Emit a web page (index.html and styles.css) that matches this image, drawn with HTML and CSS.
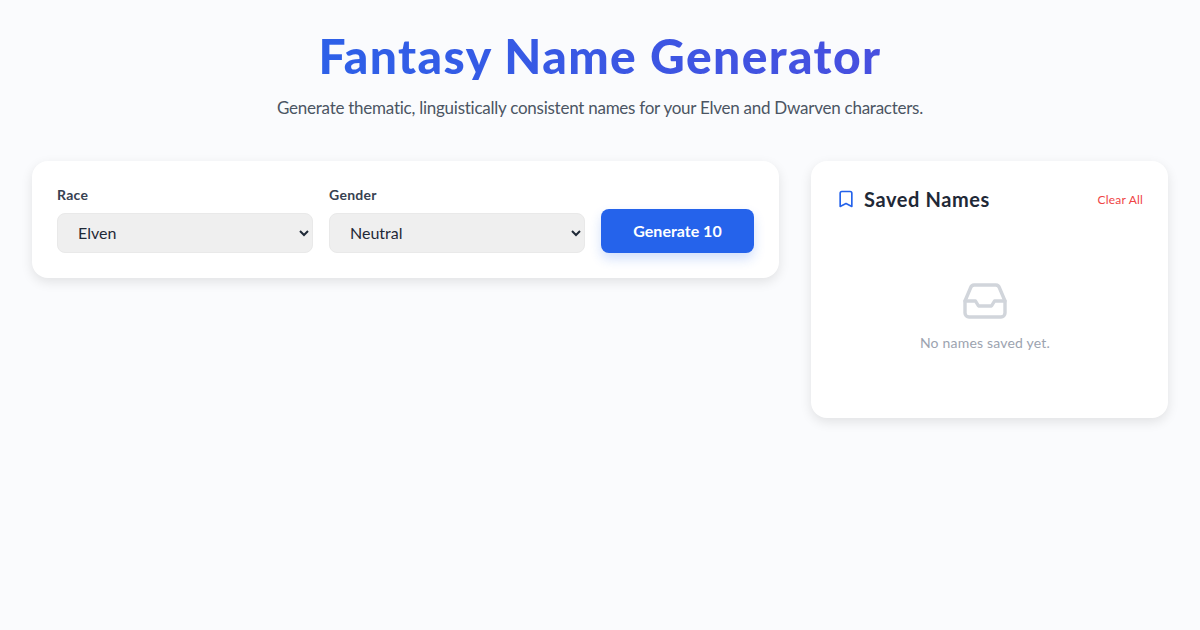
FILE: index.html
```html
<!DOCTYPE html>
<html lang="en">
<head>
    <meta charset="UTF-8">
    <meta name="viewport" content="width=device-width, initial-scale=1.0">
    <title>Fantasy Name Generator</title>
    <link rel="stylesheet" href="styles.css">
</head>

<body>

<header class="page-header">
    <h1>Fantasy Name Generator</h1>
    <p>Generate thematic, linguistically consistent names for your Elven and Dwarven characters.</p>
</header>

<main class="layout">
    <!-- Section: Generator form -->
    <section class="card generator">
        <div class="field">
            <label for="race">Race</label>
            <select id="race">
                <option>Elven</option>
                <option>Dwarven</option>
            </select>
        </div>
        <div class="field">
            <label for="gender">Gender</label>
            <select id="gender">
                <option>Neutral</option>
                <option>Male</option>
                <option>Female</option>
            </select>
        </div>
        <button class="generate-btn">Generate 10</button>
    </section>

    <!-- Section: Saved names -->
    <aside class="card saved">
        <div class="saved-header">
            <h2>
                <svg class="bookmark-icon" viewBox="0 0 24 24" fill="none" stroke="currentColor" stroke-width="2" stroke-linecap="round" stroke-linejoin="round">
                    <path d="M5 5a2 2 0 0 1 2-2h10a2 2 0 0 1 2 2v16l-7-3.5L5 21V5z"/>
                </svg>
                Saved Names
            </h2>
            <button class="clear-btn">Clear All</button>
        </div>
        <div class="empty">
            <svg class="inbox-icon" viewBox="0 0 44 36" fill="none" stroke="currentColor" stroke-width="3.4" stroke-linecap="round" stroke-linejoin="round">
                <path d="M2 18l5.500-13A4 4 0 0 1 11.200 2h21.600a4 4 0 0 1 3.700 3L42 18v12a4 4 0 0 1-4 4H6a4 4 0 0 1-4-4V18z"/>
                <path d="M2 18h10.500l3 5h13l3-5H42"/>
            </svg>
            <p>No names saved yet.</p>
        </div>
    </aside>
</main>

</body>
</html>
```

FILE: styles.css
```css
body {
    font-family: "Lato", "Noto Sans", sans-serif;
    margin: 0;
    padding: 32px;
    background-color: #fafbfd;
    color: #1f2937;
}

.page-header {
    text-align: center;
    margin-bottom: 41px;
}

.page-header h1 {
    display: inline-block;
    font-size: 48px;
    font-weight: 900;
    line-height: 48px;
    letter-spacing: 1.4px;
    margin: 0 0 16px;
    background: linear-gradient(90deg, #2d60e8, #474fdf);
    -webkit-background-clip: text;
    background-clip: text;
    color: transparent;
}

.page-header p {
    font-size: 17px;
    line-height: 24px;
    margin: 0;
    color: #4b5563;
    letter-spacing: -0.25px;
}

.layout {
    display: flex;
    align-items: flex-start;
    gap: 32px;
}

.card {
    background-color: white;
    border-radius: 16px;
    box-shadow: 0 4px 12px rgba(0, 0, 0, 0.1);
}

.generator {
    flex: 1;
    display: flex;
    align-items: flex-end;
    gap: 16px;
    padding: 25px;
}

.field {
    flex: 1;
}

.field label {
    display: block;
    font-size: 14px;
    font-weight: 700;
    line-height: 18px;
    letter-spacing: 0.3px;
    margin-bottom: 9px;
    color: #374151;
}

.field select {
    display: block;
    width: 100%;
    height: 40px;
    padding: 0 4px 2px 16px;
    font-family: inherit;
    font-size: 16px;
    color: #1f2937;
    background-color: #efefef;
    border: 1px solid #e9e9e9;
    border-radius: 8px;
}

.generate-btn {
    width: 153px;
    height: 44px;
    padding: 0 0 2px;
    font-family: inherit;
    font-size: 16px;
    font-weight: 700;
    color: white;
    background-color: #2563eb;
    border: none;
    border-radius: 8px;
    box-shadow: 0 6px 12px rgba(37, 99, 235, 0.2);
    cursor: pointer;
}

.saved {
    width: 357px;
    height: 257px;
    box-sizing: border-box;
    padding: 24px 25px 0;
}

.saved-header {
    display: flex;
    justify-content: space-between;
    align-items: center;
}

.saved-header h2 {
    display: flex;
    align-items: center;
    gap: 8px;
    margin: 0;
    font-size: 20px;
    font-weight: 700;
    line-height: 28px;
    letter-spacing: 0.6px;
    color: #1f2937;
}

.bookmark-icon {
    width: 20px;
    height: 20px;
    color: #2563eb;
}

.clear-btn {
    padding: 0;
    font-family: inherit;
    font-size: 12px;
    letter-spacing: 0.2px;
    color: #ef4444;
    background: none;
    border: none;
    cursor: pointer;
}

.empty {
    margin-top: 70px;
    padding-right: 9px;
    text-align: center;
    color: #9ca3af;
}

.inbox-icon {
    display: block;
    width: 44px;
    height: 36px;
    margin: 0 auto 14px;
    color: #d1d5db;
}

.empty p {
    margin: 0;
    font-size: 14px;
    line-height: 20px;
    letter-spacing: 0.2px;
}
```
